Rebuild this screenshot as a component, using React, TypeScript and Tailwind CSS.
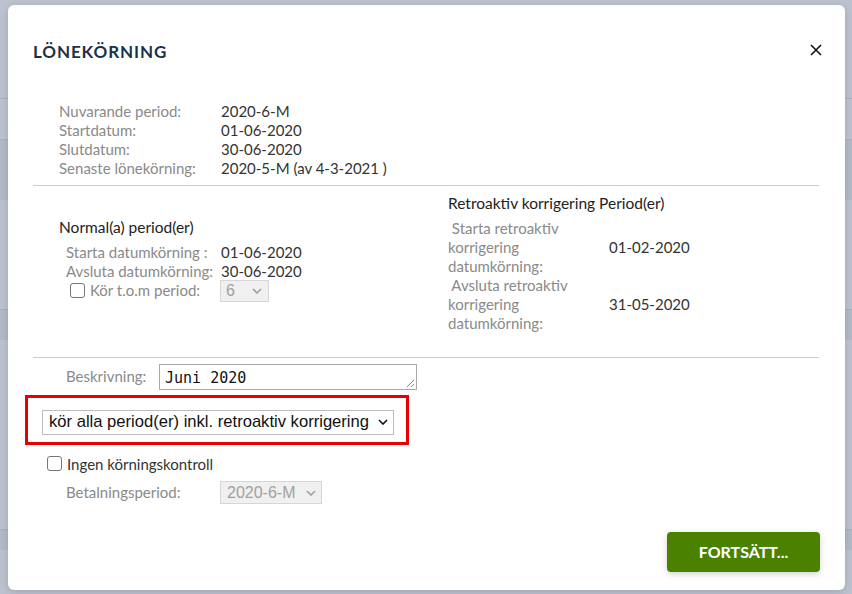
import React from "react";

const ui = { fontFamily: "Lato, 'Noto Sans', sans-serif" };
const arial = { fontFamily: "'Liberation Sans', Arial, sans-serif" };

type Row = [string, string];

const periodInfo: Row[] = [
  ["Nuvarande period:", "2020-6-M"],
  ["Startdatum:", "01-06-2020"],
  ["Slutdatum:", "30-06-2020"],
  ["Senaste lönekörning:", "2020-5-M (av 4-3-2021 )"],
];

const Chevron = ({ className = "" }: { className?: string }) => (
  <svg viewBox="0 0 10 6" className={className} fill="none" stroke="currentColor" strokeWidth="1.6">
    <path d="M1 1l4 4 4-4" />
  </svg>
);

const Checkbox = () => (
  <span className="inline-block h-[15px] w-[15px] shrink-0 rounded-[3px] border border-[#767676] bg-white" />
);

// Page that sits dimmed behind the dialog
const Backdrop = () => (
  <div className="absolute inset-0 flex flex-col bg-[#bcc3cf]">
    <div className="h-[99px] border-b border-[#a9b1be]" />
    <div className="h-[41px] border-b border-[#a9b1be]" />
    <div className="h-[60px] bg-[#b2bac8]" />
    <div className="h-[110px] border-b border-[#a9b1be]" />
    <div className="h-[30px] bg-[#b2bac8]" />
    <div className="h-[190px] border-b border-[#a9b1be]" />
    <div className="h-[20px] bg-[#b2bac8]" />
  </div>
);

export default function App() {
  return (
    <div className="relative h-[594px] w-[852px] overflow-hidden" style={ui}>
      <Backdrop />
      <div className="absolute left-[8px] top-[5px] flex h-[585px] w-[837px] flex-col rounded-[6px] bg-white px-[25px] shadow-[0_2px_8px_rgba(0,0,0,0.15)]">
        {/* header */}
        <div className="flex items-start justify-between pt-[34px]">
          <h1 className="text-[17px] font-bold tracking-[0.9px] text-[#1c3148]">LÖNEKÖRNING</h1>
          <button className="mr-[-2px] mt-[5px] text-[#111]">
            <svg viewBox="0 0 12 12" className="h-[12px] w-[12px]" stroke="currentColor" strokeWidth="1.6">
              <path d="M1 1l10 10M11 1L1 11" />
            </svg>
          </button>
        </div>

        {/* current period */}
        <div className="mt-[37px] grid grid-cols-[162px_1fr] pl-[26px] text-[15px] leading-[19px]">
          {periodInfo.map(([label, value]) => (
            <React.Fragment key={label}>
              <span className="text-[#8a8a8a]">{label}</span>
              <span className="text-[#333]">{value}</span>
            </React.Fragment>
          ))}
        </div>

        <div className="mt-[7px] h-px w-[786px] bg-[#cccccc]" />

        {/* normal vs. retroactive periods */}
        <div className="flex h-[171px] text-[15px] leading-[19px]">
          <div className="w-[415px] pl-[26px] pt-[32px]">
            <div className="text-[15.5px] text-[#222]">Normal(a) period(er)</div>
            <div className="mt-[6px] grid grid-cols-[155px_1fr] pl-[7px]">
              <span className="text-[#8a8a8a]">Starta datumkörning :</span>
              <span className="text-[#333]">01-06-2020</span>
              <span className="text-[#8a8a8a]">Avsluta datumkörning:</span>
              <span className="text-[#333]">30-06-2020</span>
            </div>
            <div className="mt-[-1px] flex items-center pl-[11px]">
              <Checkbox />
              <span className="ml-[5px] w-[130px] text-[#8a8a8a]">Kör t.o.m period:</span>
              <span
                className="flex h-[22px] w-[49px] items-center justify-between border border-[#d6d6d6] bg-[#f0f0f0] pl-[5px] pr-[6px] text-[16px] text-[#a0a0a0]"
                style={arial}
              >
                6
                <Chevron className="h-[6px] w-[10px]" />
              </span>
            </div>
          </div>
          <div className="pt-[8px]">
            <div className="text-[15.5px] text-[#222]">Retroaktiv korrigering Period(er)</div>
            <div className="mt-[6px] grid grid-cols-[161px_1fr] items-center">
              <span className="w-[135px] text-[#8a8a8a]">
                &nbsp;Starta retroaktiv korrigering datumkörning:
              </span>
              <span className="text-[#333]">01-02-2020</span>
              <span className="w-[135px] text-[#8a8a8a]">
                &nbsp;Avsluta retroaktiv korrigering datumkörning:
              </span>
              <span className="text-[#333]">31-05-2020</span>
            </div>
          </div>
        </div>

        <div className="h-px w-[786px] bg-[#cccccc]" />

        {/* description */}
        <div className="mt-[6px] flex items-start pl-[33px] text-[15px]">
          <span className="mt-[1px] w-[93px] text-[#8a8a8a]">Beskrivning:</span>
          <div
            className="relative h-[26px] w-[258px] border border-[#a9a9a9] pl-[5px] pt-[3px] text-[15px] leading-[20px] text-[#111]"
            style={{ fontFamily: "'DejaVu Sans Mono', 'Liberation Mono', monospace" }}
          >
            Juni 2020
            <svg viewBox="0 0 8 8" className="absolute bottom-[2px] right-[2px] h-[8px] w-[8px]" stroke="#888" strokeWidth="1">
              <path d="M8 1L1 8M8 5L5 8" />
            </svg>
          </div>
        </div>

        {/* run mode */}
        <div className="mt-[5px] ml-[-8px] w-[384px] border-[3px] border-[#e60000] px-[14px] pb-[7px] pt-[12px]">
          <div
            className="flex h-[25px] w-[352px] items-center justify-between border border-[#bdbdbd] pl-[6px] pr-[5px] text-[16.6px] text-[#111]"
            style={arial}
          >
            kör alla period(er) inkl. retroaktiv korrigering
            <Chevron className="h-[6px] w-[10px]" />
          </div>
        </div>

        <div className="mt-[8px] flex items-center pl-[14px] text-[15px]">
          <Checkbox />
          <span className="ml-[5px] text-[#333]">Ingen körningskontroll</span>
        </div>

        <div className="mt-[6px] flex items-center pl-[33px] text-[15px]">
          <span className="w-[154px] text-[#8a8a8a]">Betalningsperiod:</span>
          <span
            className="flex h-[23px] w-[102px] items-center justify-between border border-[#d6d6d6] bg-[#f0f0f0] pl-[6px] pr-[5px] text-[16px] text-[#a0a0a0]"
            style={arial}
          >
            2020-6-M
            <Chevron className="h-[6px] w-[10px]" />
          </span>
        </div>

        <div className="mt-auto flex justify-end pb-[18px]">
          <button className="h-[40px] w-[153px] rounded-[4px] bg-[#4a8200] text-[16px] font-bold text-white shadow-[0_2px_6px_rgba(0,0,0,0.18)]">
            FORTSÄTT...
          </button>
        </div>
      </div>
    </div>
  );
}
